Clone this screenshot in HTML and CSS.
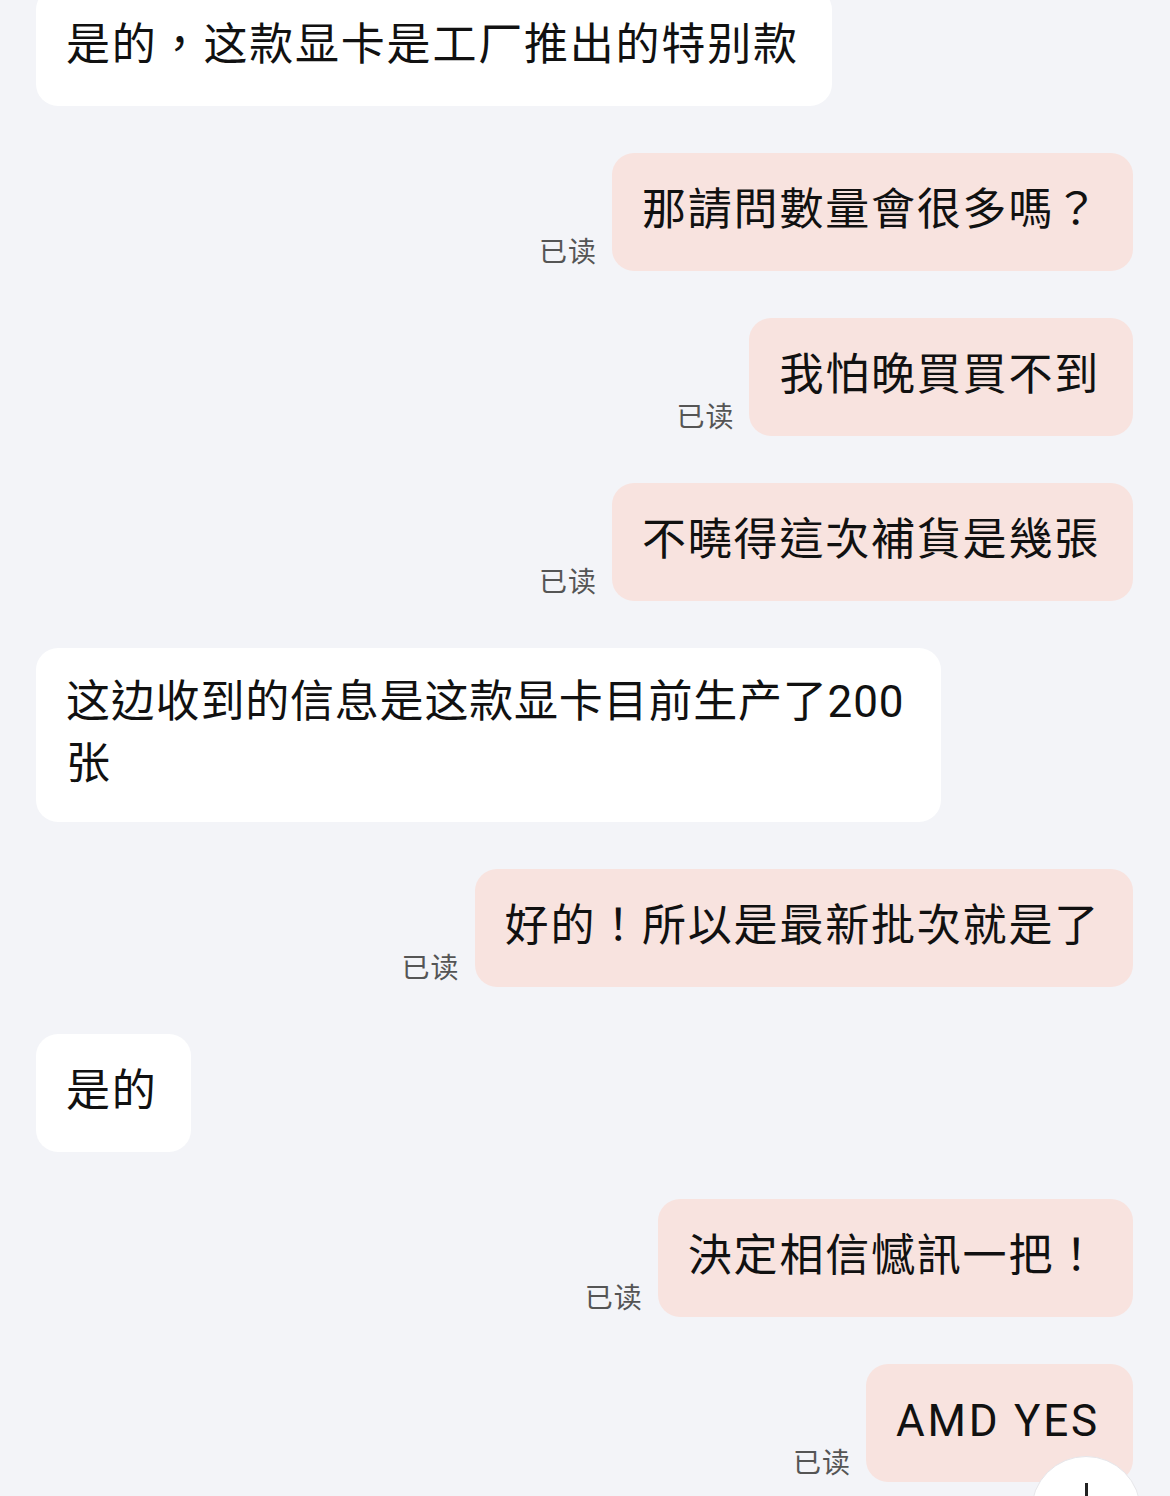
FILE: index.html
```html
<!DOCTYPE html>
<html lang="zh-Hant">
<head>
<meta charset="utf-8">
<title>Chat</title>
<link rel="stylesheet" href="styles.css">
</head>
<body>
<div class="chat">
  <div class="row in"><div class="bubble">是的，这款显卡是工厂推出的特别款</div></div>
  <div class="row out"><span class="read">已读</span><div class="bubble">那請問數量會很多嗎？</div></div>
  <div class="row out"><span class="read">已读</span><div class="bubble">我怕晚買買不到</div></div>
  <div class="row out"><span class="read">已读</span><div class="bubble">不曉得這次補貨是幾張</div></div>
  <div class="row in"><div class="bubble tight">这边收到的信息是这款显卡目前生产了200张</div></div>
  <div class="row out"><span class="read">已读</span><div class="bubble">好的！所以是最新批次就是了</div></div>
  <div class="row in"><div class="bubble">是的</div></div>
  <div class="row out"><span class="read">已读</span><div class="bubble">決定相信憾訊一把！</div></div>
  <div class="row out"><span class="read">已读</span><div class="bubble latin">AMD YES</div></div>
</div>
<div class="scroll-down"><span class="arrow"></span></div>
</body>
</html>
```
FILE: styles.css
```css
html, body {
  margin: 0;
  padding: 0;
  background: #f3f4f8;
  overflow: hidden;
  height: 1496px;
}
body {
  font-family: Roboto, "Noto Sans CJK TC", "Noto Sans CJK SC", sans-serif;
  color: #111;
  position: relative;
}
.chat {
  display: flex;
  flex-direction: column;
  gap: 47px;
  padding: 0 37px 0 36px;
  margin-top: -12px;
}
.row {
  display: flex;
  align-items: flex-end;
}
.row.out {
  justify-content: flex-end;
  gap: 15px;
}
.bubble {
  box-sizing: border-box;
  max-width: 905px;
  padding: 29px 33px 33px 30px;
  font-size: 44px;
  line-height: 56px;
  letter-spacing: 1.8px;
  border-radius: 22px;
  background: #ffffff;
}
.bubble.tight {
  letter-spacing: 0.8px;
  line-height: 62px;
  padding: 23px 31px 27px 30px;
}
.bubble.latin {
  letter-spacing: 2.8px;
}
.out .bubble {
  background: #f8e3df;
}
.read {
  font-size: 28px;
  line-height: 32px;
  letter-spacing: 1px;
  color: #555;
  margin-bottom: 2px;
}
.scroll-down {
  position: absolute;
  left: 1031px;
  top: 1456px;
  width: 110px;
  height: 110px;
  border-radius: 50%;
  background: #fff;
  border: 1px solid #e6e6ea;
  box-sizing: border-box;
}
.arrow {
  position: absolute;
  left: 53px;
  top: 26px;
  width: 3px;
  height: 30px;
  background: #222;
}
```
